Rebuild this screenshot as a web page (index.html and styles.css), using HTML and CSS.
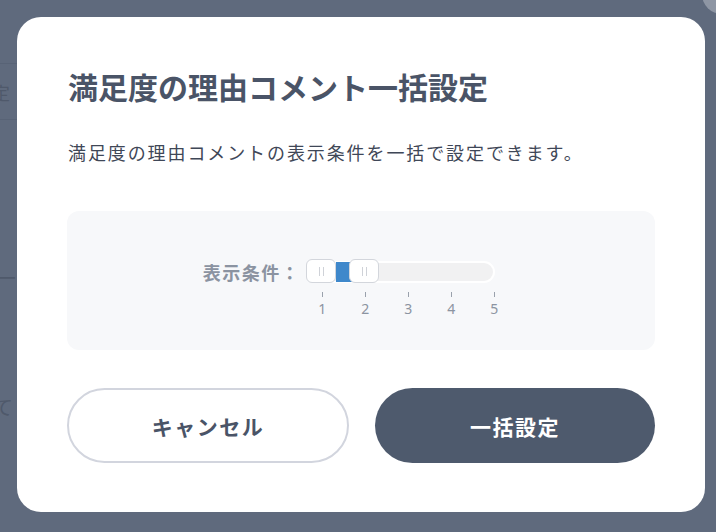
FILE: index.html
```html
<!DOCTYPE html>
<html lang="ja">
<head>
<meta charset="utf-8">
<title>満足度の理由コメント一括設定</title>
<link rel="stylesheet" href="styles.css">
</head>
<body>
<div class="page">
  <div class="page-row page-row-first"><span class="page-text">定</span></div>
  <div class="page-row page-row-plain"><span class="page-text">ー</span></div>
  <div class="page-row page-row-plain2"><span class="page-text">て</span></div>
  <div class="avatar"></div>
</div>
<div class="overlay">
  <div class="modal">
    <h1 class="title">満足度の理由コメント一括設定</h1>
    <p class="desc">満足度の理由コメントの表示条件を一括で設定できます。</p>
    <div class="panel">
      <div class="field">
        <span class="field-label">表示条件：</span>
        <div class="slider">
          <div class="track">
            <div class="fill"></div>
            <div class="handle handle-a"><i></i><i></i></div>
            <div class="handle handle-b"><i></i><i></i></div>
          </div>
          <div class="scale">
            <div class="mark"><span class="tick"></span><span class="num">1</span></div>
            <div class="mark"><span class="tick"></span><span class="num">2</span></div>
            <div class="mark"><span class="tick"></span><span class="num">3</span></div>
            <div class="mark"><span class="tick"></span><span class="num">4</span></div>
            <div class="mark"><span class="tick"></span><span class="num">5</span></div>
          </div>
        </div>
      </div>
    </div>
    <div class="actions">
      <button class="btn btn-cancel">キャンセル</button>
      <button class="btn btn-primary">一括設定</button>
    </div>
  </div>
</div>
</body>
</html>
```

FILE: styles.css
```css
* { box-sizing: border-box; }
html, body { margin: 0; padding: 0; }
body {
  width: 716px;
  height: 532px;
  overflow: hidden;
  background: #5f6a7d;
  font-family: "Noto Sans CJK JP", "Noto Sans", sans-serif;
  position: relative;
}
.page {
  padding-top: 63px;
}
.page-row {
  width: 11px;
  display: flex;
  justify-content: flex-end;
  white-space: nowrap;
  color: #4f596b;
  font-size: 18px;
}
.page-row-first {
  width: 60px;
  height: 57px;
  border-top: 1px solid #586376;
  border-bottom: 1px solid #586376;
  align-items: center;
  justify-content: flex-start;
}
.page-row-first .page-text { margin-left: -8px; }
.page-row-plain { margin-top: 143px; width: 17px; font-size: 20px; }
.page-row-plain2 { margin-top: 100px; width: 13px; font-size: 20px; }
.avatar {
  position: absolute;
  right: -26px;
  top: -26px;
  width: 40px;
  height: 40px;
  border-radius: 50%;
  background: #8e96a4;
}
.overlay {
  position: absolute;
  inset: 0;
  padding: 17px 11px 20px 17px;
}
.modal {
  background: #fff;
  border-radius: 24px;
  height: 495px;
  padding: 48px 50px 0 50px;
}
.title {
  margin: 0 0 0 1px;
  font-size: 30px;
  line-height: 42px;
  font-weight: 700;
  color: #4a5467;
}
.desc {
  margin: 31px 0 0 1px;
  font-size: 18px;
  line-height: 29px;
  letter-spacing: 1.9px;
  color: #3f4757;
}
.panel {
  margin-top: 44px;
  height: 139px;
  background: #f7f8fa;
  border-radius: 12px;
  padding-top: 48px;
  display: flex;
  justify-content: center;
  padding-right: 24px;
}
.field {
  display: flex;
  align-items: flex-start;
  gap: 6px;
}
.field-label {
  font-size: 18px;
  line-height: 22px;
  padding-top: 2px;
  font-weight: 700;
  letter-spacing: 1.5px;
  color: #8b93a1;
}
.slider {
  width: 189px;
  padding-top: 2px;
}
.track {
  position: relative;
  height: 22px;
  border: 2px solid #fff;
  border-radius: 11px;
  background: #f1f1f2;
}
.fill {
  position: absolute;
  left: 28px;
  width: 17px;
  top: -1px;
  height: 20px;
  background: #3f88cb;
}
.handle {
  position: absolute;
  top: -4px;
  width: 30px;
  height: 24px;
  background: #fff;
  border: 1px solid #d3d6dc;
  border-radius: 6px;
  display: flex;
  justify-content: center;
  align-items: center;
  gap: 3px;
}
.handle i {
  display: block;
  width: 1px;
  height: 9px;
  background: #cfd2d8;
}
.handle-a { left: -2px; }
.handle-b { left: 41px; }
.scale {
  display: flex;
  gap: 23px;
  margin-left: 6px;
  margin-top: 9px;
}
.mark {
  width: 20px;
  flex: none;
  display: flex;
  flex-direction: column;
  align-items: center;
}
.tick {
  width: 1px;
  height: 5px;
  background: #9aa1ac;
}
.num {
  margin-top: 4px;
  font-family: "Noto Sans", "Noto Sans CJK JP", sans-serif;
  font-size: 14px;
  line-height: 16px;
  color: #8c94a1;
}
.actions {
  margin-top: 38px;
  display: grid;
  grid-template-columns: 282px 280px;
  gap: 26px;
}
.btn {
  height: 75px;
  border-radius: 38px;
  font-family: "Noto Sans CJK JP", "Noto Sans", sans-serif;
  font-size: 21px;
  font-weight: 700;
  letter-spacing: 1.5px;
  cursor: pointer;
}
.btn-cancel {
  background: #fff;
  border: 2px solid #d2d5de;
  color: #4a5467;
}
.btn-primary {
  background: #4e5a6d;
  border: none;
  color: #fff;
}
```
